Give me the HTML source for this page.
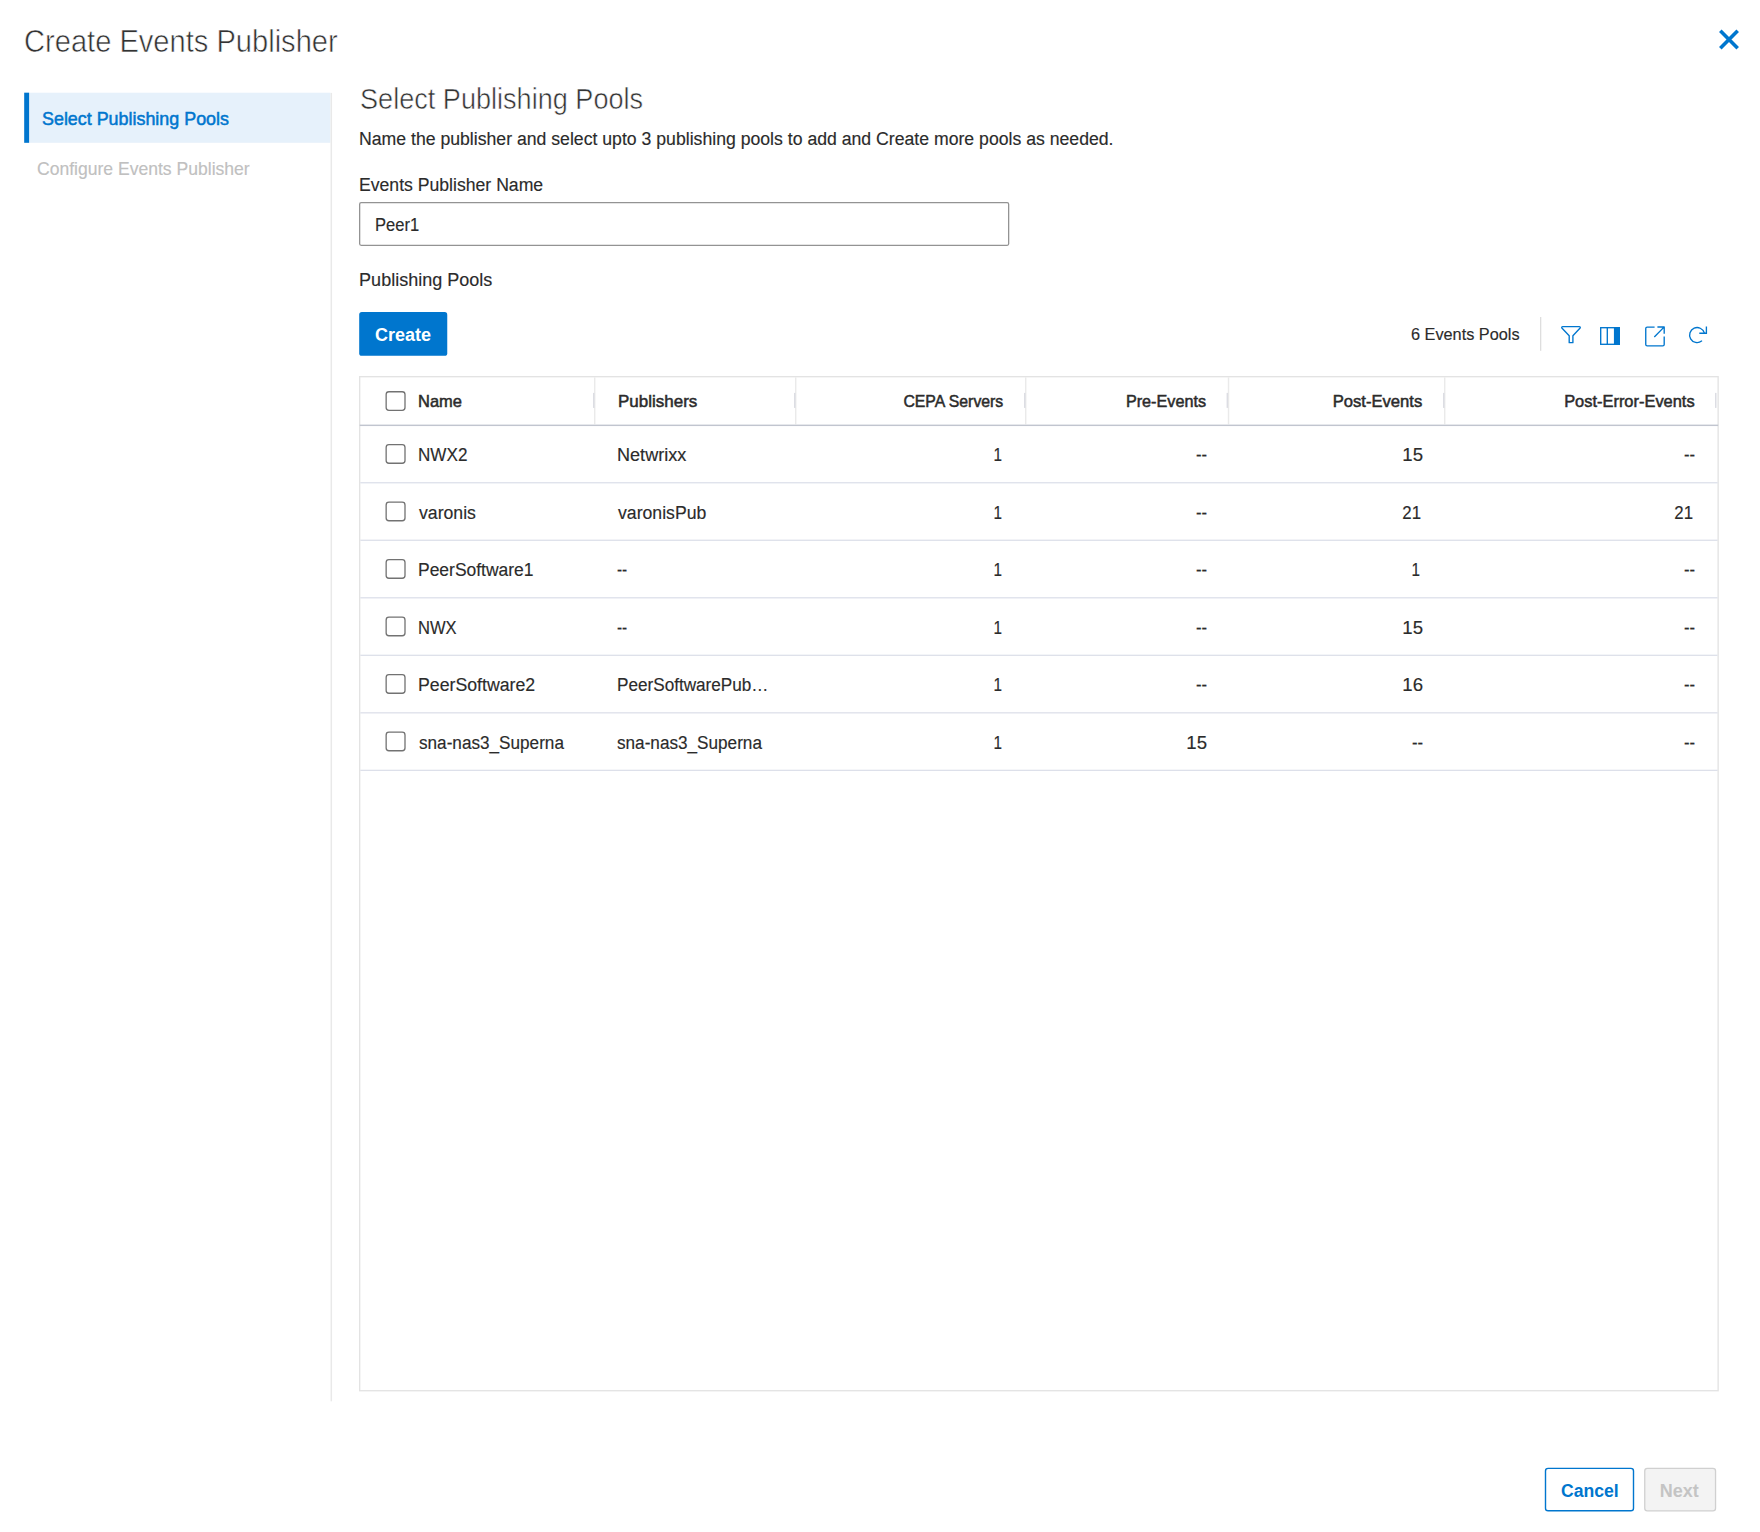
<!DOCTYPE html>
<html lang="en"><head><meta charset="utf-8"><title>Create Events Publisher</title>
<style>
html,body{margin:0;padding:0;background:#fff;}
body{width:1760px;height:1532px;position:relative;overflow:hidden;font-family:"Liberation Sans",sans-serif;}
.abs{position:absolute;box-sizing:border-box;}
.t{position:absolute;display:block;white-space:nowrap;margin:0;padding:0;border:0;background:none;font-family:"Liberation Sans",sans-serif;font-style:normal;text-decoration:none;text-align:left;letter-spacing:normal;box-sizing:content-box;overflow:visible;cursor:default;}

</style></head>
<body>
<svg class="abs" style="left:0;top:0" width="1760" height="1532" viewBox="0 0 1760 1532">
<rect x="24.20" y="92.70" width="306.20" height="50.10" fill="#e6f1fb"/>
<rect x="24.20" y="92.70" width="4.90" height="50.10" fill="#0076ce"/>
<rect x="330.55" y="92.90" width="1.50" height="1308.40" fill="#e9e9e9"/>
<path d="M1720.3 30.7 L1737.7 48.3 M1737.7 30.7 L1720.3 48.3" stroke="#0076ce" stroke-width="3.6" fill="none"/>
<rect x="359.65" y="202.65" width="649.00" height="42.70" rx="1.5" fill="#fff" stroke="#939393" stroke-width="1.3"/>
<rect x="359.20" y="312.10" width="88.05" height="43.70" rx="2.6" fill="#0076ce"/>
<rect x="1540.00" y="317.00" width="1.30" height="33.80" fill="#dedede"/>
<rect x="359.68" y="376.68" width="1358.45" height="1014.05" fill="none" stroke="#e3e3e3" stroke-width="1.35"/>
<rect x="594.00" y="377.30" width="1.45" height="46.90" fill="#eaeaea"/>
<rect x="795.00" y="377.30" width="1.45" height="46.90" fill="#eaeaea"/>
<rect x="1025.00" y="377.30" width="1.45" height="46.90" fill="#eaeaea"/>
<rect x="1227.80" y="377.30" width="1.45" height="46.90" fill="#eaeaea"/>
<rect x="1444.00" y="377.30" width="1.45" height="46.90" fill="#eaeaea"/>
<rect x="593.00" y="392.90" width="1.50" height="15.00" fill="#dcdde3"/>
<rect x="794.00" y="392.90" width="1.50" height="15.00" fill="#dcdde3"/>
<rect x="1024.00" y="392.90" width="1.50" height="15.00" fill="#dcdde3"/>
<rect x="1226.60" y="392.90" width="1.50" height="15.00" fill="#dcdde3"/>
<rect x="1443.00" y="392.90" width="1.50" height="15.00" fill="#dcdde3"/>
<rect x="1715.00" y="392.90" width="1.50" height="15.00" fill="#dcdde3"/>
<rect x="359.70" y="424.60" width="1358.50" height="1.45" fill="#c1c5cf"/>
<rect x="360.30" y="482.10" width="1357.30" height="1.30" fill="#dde0ea"/>
<rect x="360.30" y="539.62" width="1357.30" height="1.30" fill="#dde0ea"/>
<rect x="360.30" y="597.14" width="1357.30" height="1.30" fill="#dde0ea"/>
<rect x="360.30" y="654.66" width="1357.30" height="1.30" fill="#dde0ea"/>
<rect x="360.30" y="712.18" width="1357.30" height="1.30" fill="#dde0ea"/>
<rect x="360.30" y="769.70" width="1357.30" height="1.30" fill="#dde0ea"/>
<rect x="386.15" y="391.75" width="18.85" height="18.55" rx="2.8" fill="#fff" stroke="#727272" stroke-width="1.3"/>
<rect x="386.15" y="444.70" width="18.85" height="18.55" rx="2.8" fill="#fff" stroke="#727272" stroke-width="1.3"/>
<rect x="386.15" y="502.20" width="18.85" height="18.55" rx="2.8" fill="#fff" stroke="#727272" stroke-width="1.3"/>
<rect x="386.15" y="559.70" width="18.85" height="18.55" rx="2.8" fill="#fff" stroke="#727272" stroke-width="1.3"/>
<rect x="386.15" y="617.20" width="18.85" height="18.55" rx="2.8" fill="#fff" stroke="#727272" stroke-width="1.3"/>
<rect x="386.15" y="674.70" width="18.85" height="18.55" rx="2.8" fill="#fff" stroke="#727272" stroke-width="1.3"/>
<rect x="386.15" y="732.20" width="18.85" height="18.55" rx="2.8" fill="#fff" stroke="#727272" stroke-width="1.3"/>
<rect x="1545.50" y="1468.40" width="88.00" height="42.40" rx="2.6" fill="#fff" stroke="#0076ce" stroke-width="1.4"/>
<rect x="1644.75" y="1468.35" width="70.80" height="42.50" rx="2.6" fill="#f3f3f3" stroke="#d0d0d0" stroke-width="1.3"/>
<g fill="none" stroke="#0076ce" stroke-width="1.35">
<path transform="translate(1559 323)" stroke-linejoin="round" d="M3.9 3.65 H20.1 C21.4 3.65 21.6 4.5 20.9 5.3 L13.9 12.7 V19.65 H10.2 V12.7 L3.1 5.3 C2.4 4.5 2.6 3.65 3.9 3.65 Z"/>
<g transform="translate(1598 324)"><rect x="2.7" y="3.7" width="18.6" height="16.6"/><path d="M9.3 3.7 V20.3"/><rect x="16.6" y="3.7" width="4.7" height="16.6" fill="#0076ce"/></g>
<g transform="translate(1643 323)" stroke-linejoin="round"><path d="M11.6 4.1 H4.2 Q2.75 4.1 2.75 5.5 V21.5 Q2.75 22.9 4.2 22.9 H19.8 Q21.2 22.9 21.2 21.5 V13.5"/><path d="M11.3 14 L21 4.1 M14.4 3.95 H21.2 V10.7"/></g>
<g transform="translate(1686 323)"><path d="M18.3 9.9 A7.5 7.5 0 1 0 15.6 18.05" stroke-linecap="round"/><path d="M20.4 3.4 V10.2 H13.3"/></g>
</g>
</svg>

<header>
<h1 id="title" class="t" style="left:24.22px;transform-origin:0 50%;top:16.88px;font-size:31.8px;font-weight:400;color:#333;transform:scaleX(0.9149);line-height:48px;height:48px;-webkit-text-stroke:0.6px #fff;">Create Events Publisher</h1>
</header>
<nav>
<a id="nav1" class="t" style="left:42.25px;transform-origin:0 50%;top:105.53px;font-size:17.8px;font-weight:400;color:#0076ce;transform:scaleX(1.0061);line-height:27px;height:27px;-webkit-text-stroke:0.5px #0076ce;">Select Publishing Pools</a>
<span id="nav2" class="t" style="left:36.60px;transform-origin:0 50%;top:155.83px;font-size:17.8px;font-weight:400;color:#c0c0c0;transform:scaleX(0.9870);line-height:27px;height:27px;-webkit-text-stroke:0.15px #c0c0c0;">Configure Events Publisher</span>
</nav>
<main>
<h2 id="h2" class="t" style="left:360.09px;transform-origin:0 50%;top:76.98px;font-size:29.2px;font-weight:400;color:#333;transform:scaleX(0.9281);line-height:44px;height:44px;-webkit-text-stroke:0.55px #fff;">Select Publishing Pools</h2>
<p id="desc" class="t" style="left:359.31px;transform-origin:0 50%;top:126.16px;font-size:18.0px;font-weight:400;color:#2b2b2b;transform:scaleX(0.9805);line-height:27px;height:27px;-webkit-text-stroke:0.15px #2b2b2b;">Name the publisher and select upto 3 publishing pools to add and Create more pools as needed.</p>
<label id="lbl1" class="t" style="left:359.11px;transform-origin:0 50%;top:171.56px;font-size:18.0px;font-weight:400;color:#2b2b2b;transform:scaleX(0.9790);line-height:27px;height:27px;-webkit-text-stroke:0.15px #2b2b2b;">Events Publisher Name</label>
<span id="inp" class="t" style="left:374.93px;transform-origin:0 50%;top:211.56px;font-size:18.0px;font-weight:400;color:#2b2b2b;transform:scaleX(0.9189);line-height:27px;height:27px;-webkit-text-stroke:0.15px #2b2b2b;">Peer1</span>
<label id="lbl2" class="t" style="left:359.11px;transform-origin:0 50%;top:266.66px;font-size:18.0px;font-weight:400;color:#2b2b2b;transform:scaleX(1.0000);line-height:27px;height:27px;-webkit-text-stroke:0.15px #2b2b2b;">Publishing Pools</label>
<button type="button" id="create" class="t" style="left:375.00px;transform-origin:0 50%;top:321.86px;font-size:18.0px;font-weight:700;color:#ffffff;transform:scaleX(1.0000);line-height:27px;height:27px;">Create</button>
<span id="count" class="t" style="left:1410.96px;transform-origin:0 50%;top:322.18px;font-size:16.5px;font-weight:400;color:#2b2b2b;transform:scaleX(0.9865);line-height:25px;height:25px;-webkit-text-stroke:0.15px #2b2b2b;">6 Events Pools</span>
<span id="hName" class="t" style="left:417.91px;transform-origin:0 50%;top:389.39px;font-size:16.2px;font-weight:400;color:#2b2b2b;transform:scaleX(1.0167);line-height:24px;height:24px;-webkit-text-stroke:0.5px #2b2b2b;">Name</span>
<span id="hPub" class="t" style="left:617.56px;transform-origin:0 50%;top:389.39px;font-size:16.2px;font-weight:400;color:#2b2b2b;transform:scaleX(1.0493);line-height:24px;height:24px;-webkit-text-stroke:0.5px #2b2b2b;">Publishers</span>
<span id="hCepa" class="t" style="right:756.59px;transform-origin:100% 50%;top:389.39px;font-size:16.2px;font-weight:400;color:#2b2b2b;transform:scaleX(0.9766);line-height:24px;height:24px;-webkit-text-stroke:0.5px #2b2b2b;">CEPA Servers</span>
<span id="hPre" class="t" style="right:554.03px;transform-origin:100% 50%;top:389.39px;font-size:16.2px;font-weight:400;color:#2b2b2b;transform:scaleX(1.0000);line-height:24px;height:24px;-webkit-text-stroke:0.5px #2b2b2b;">Pre-Events</span>
<span id="hPost" class="t" style="right:338.20px;transform-origin:100% 50%;top:389.39px;font-size:16.2px;font-weight:400;color:#2b2b2b;transform:scaleX(1.0264);line-height:24px;height:24px;-webkit-text-stroke:0.5px #2b2b2b;">Post-Events</span>
<span id="hErr" class="t" style="right:65.30px;transform-origin:100% 50%;top:389.39px;font-size:16.2px;font-weight:400;color:#2b2b2b;transform:scaleX(1.0145);line-height:24px;height:24px;-webkit-text-stroke:0.5px #2b2b2b;">Post-Error-Events</span>
<span id="r0n" class="t" style="left:418.02px;transform-origin:0 50%;top:442.31px;font-size:18.0px;font-weight:400;color:#2b2b2b;transform:scaleX(0.9504);line-height:27px;height:27px;-webkit-text-stroke:0.15px #2b2b2b;">NWX2</span>
<span id="r0p" class="t" style="left:617.11px;transform-origin:0 50%;top:442.31px;font-size:18.0px;font-weight:400;color:#2b2b2b;transform:scaleX(1.0044);line-height:27px;height:27px;-webkit-text-stroke:0.15px #2b2b2b;">Netwrixx</span>
<span id="r0c0" class="t" style="right:758.21px;transform-origin:100% 50%;top:442.31px;font-size:18.0px;font-weight:400;color:#2b2b2b;transform:scaleX(0.8500);line-height:27px;height:27px;-webkit-text-stroke:0.15px #2b2b2b;">1</span>
<span id="r0c1" class="t" style="right:553.46px;transform-origin:100% 50%;top:442.31px;font-size:18.0px;font-weight:400;color:#2b2b2b;transform:scaleX(0.9250);line-height:27px;height:27px;-webkit-text-stroke:0.15px #2b2b2b;">--</span>
<span id="r0c2" class="t" style="right:337.40px;transform-origin:100% 50%;top:442.31px;font-size:18.0px;font-weight:400;color:#2b2b2b;transform:scaleX(1.0346);line-height:27px;height:27px;-webkit-text-stroke:0.15px #2b2b2b;">15</span>
<span id="r0c3" class="t" style="right:64.56px;transform-origin:100% 50%;top:442.31px;font-size:18.0px;font-weight:400;color:#2b2b2b;transform:scaleX(0.9250);line-height:27px;height:27px;-webkit-text-stroke:0.15px #2b2b2b;">--</span>
<span id="r1n" class="t" style="left:419.04px;transform-origin:0 50%;top:499.81px;font-size:18.0px;font-weight:400;color:#2b2b2b;transform:scaleX(0.9814);line-height:27px;height:27px;-webkit-text-stroke:0.15px #2b2b2b;">varonis</span>
<span id="r1p" class="t" style="left:618.45px;transform-origin:0 50%;top:499.81px;font-size:18.0px;font-weight:400;color:#2b2b2b;transform:scaleX(0.9803);line-height:27px;height:27px;-webkit-text-stroke:0.15px #2b2b2b;">varonisPub</span>
<span id="r1c0" class="t" style="right:758.21px;transform-origin:100% 50%;top:499.81px;font-size:18.0px;font-weight:400;color:#2b2b2b;transform:scaleX(0.8500);line-height:27px;height:27px;-webkit-text-stroke:0.15px #2b2b2b;">1</span>
<span id="r1c1" class="t" style="right:553.46px;transform-origin:100% 50%;top:499.81px;font-size:18.0px;font-weight:400;color:#2b2b2b;transform:scaleX(0.9250);line-height:27px;height:27px;-webkit-text-stroke:0.15px #2b2b2b;">--</span>
<span id="r1c2" class="t" style="right:339.47px;transform-origin:100% 50%;top:499.81px;font-size:18.0px;font-weight:400;color:#2b2b2b;transform:scaleX(0.9333);line-height:27px;height:27px;-webkit-text-stroke:0.15px #2b2b2b;">21</span>
<span id="r1c3" class="t" style="right:67.41px;transform-origin:100% 50%;top:499.81px;font-size:18.0px;font-weight:400;color:#2b2b2b;transform:scaleX(0.9333);line-height:27px;height:27px;-webkit-text-stroke:0.15px #2b2b2b;">21</span>
<span id="r2n" class="t" style="left:418.02px;transform-origin:0 50%;top:557.31px;font-size:18.0px;font-weight:400;color:#2b2b2b;transform:scaleX(0.9704);line-height:27px;height:27px;-webkit-text-stroke:0.15px #2b2b2b;">PeerSoftware1</span>
<span id="r2p" class="t" style="left:617.10px;transform-origin:0 50%;top:557.31px;font-size:18.0px;font-weight:400;color:#2b2b2b;transform:scaleX(0.8500);line-height:27px;height:27px;-webkit-text-stroke:0.15px #2b2b2b;">--</span>
<span id="r2c0" class="t" style="right:758.21px;transform-origin:100% 50%;top:557.31px;font-size:18.0px;font-weight:400;color:#2b2b2b;transform:scaleX(0.8500);line-height:27px;height:27px;-webkit-text-stroke:0.15px #2b2b2b;">1</span>
<span id="r2c1" class="t" style="right:553.46px;transform-origin:100% 50%;top:557.31px;font-size:18.0px;font-weight:400;color:#2b2b2b;transform:scaleX(0.9250);line-height:27px;height:27px;-webkit-text-stroke:0.15px #2b2b2b;">--</span>
<span id="r2c2" class="t" style="right:340.40px;transform-origin:100% 50%;top:557.31px;font-size:18.0px;font-weight:400;color:#2b2b2b;transform:scaleX(0.8500);line-height:27px;height:27px;-webkit-text-stroke:0.15px #2b2b2b;">1</span>
<span id="r2c3" class="t" style="right:64.56px;transform-origin:100% 50%;top:557.31px;font-size:18.0px;font-weight:400;color:#2b2b2b;transform:scaleX(0.9250);line-height:27px;height:27px;-webkit-text-stroke:0.15px #2b2b2b;">--</span>
<span id="r3n" class="t" style="left:418.04px;transform-origin:0 50%;top:614.81px;font-size:18.0px;font-weight:400;color:#2b2b2b;transform:scaleX(0.9195);line-height:27px;height:27px;-webkit-text-stroke:0.15px #2b2b2b;">NWX</span>
<span id="r3p" class="t" style="left:617.10px;transform-origin:0 50%;top:614.81px;font-size:18.0px;font-weight:400;color:#2b2b2b;transform:scaleX(0.8500);line-height:27px;height:27px;-webkit-text-stroke:0.15px #2b2b2b;">--</span>
<span id="r3c0" class="t" style="right:758.21px;transform-origin:100% 50%;top:614.81px;font-size:18.0px;font-weight:400;color:#2b2b2b;transform:scaleX(0.8500);line-height:27px;height:27px;-webkit-text-stroke:0.15px #2b2b2b;">1</span>
<span id="r3c1" class="t" style="right:553.46px;transform-origin:100% 50%;top:614.81px;font-size:18.0px;font-weight:400;color:#2b2b2b;transform:scaleX(0.9250);line-height:27px;height:27px;-webkit-text-stroke:0.15px #2b2b2b;">--</span>
<span id="r3c2" class="t" style="right:337.40px;transform-origin:100% 50%;top:614.81px;font-size:18.0px;font-weight:400;color:#2b2b2b;transform:scaleX(1.0346);line-height:27px;height:27px;-webkit-text-stroke:0.15px #2b2b2b;">15</span>
<span id="r3c3" class="t" style="right:64.56px;transform-origin:100% 50%;top:614.81px;font-size:18.0px;font-weight:400;color:#2b2b2b;transform:scaleX(0.9250);line-height:27px;height:27px;-webkit-text-stroke:0.15px #2b2b2b;">--</span>
<span id="r4n" class="t" style="left:418.02px;transform-origin:0 50%;top:672.31px;font-size:18.0px;font-weight:400;color:#2b2b2b;transform:scaleX(0.9839);line-height:27px;height:27px;-webkit-text-stroke:0.15px #2b2b2b;">PeerSoftware2</span>
<span id="r4p" class="t" style="left:617.16px;transform-origin:0 50%;top:672.31px;font-size:18.0px;font-weight:400;color:#2b2b2b;transform:scaleX(0.9521);line-height:27px;height:27px;-webkit-text-stroke:0.15px #2b2b2b;">PeerSoftwarePub…</span>
<span id="r4c0" class="t" style="right:758.21px;transform-origin:100% 50%;top:672.31px;font-size:18.0px;font-weight:400;color:#2b2b2b;transform:scaleX(0.8500);line-height:27px;height:27px;-webkit-text-stroke:0.15px #2b2b2b;">1</span>
<span id="r4c1" class="t" style="right:553.46px;transform-origin:100% 50%;top:672.31px;font-size:18.0px;font-weight:400;color:#2b2b2b;transform:scaleX(0.9250);line-height:27px;height:27px;-webkit-text-stroke:0.15px #2b2b2b;">--</span>
<span id="r4c2" class="t" style="right:337.40px;transform-origin:100% 50%;top:672.31px;font-size:18.0px;font-weight:400;color:#2b2b2b;transform:scaleX(1.0341);line-height:27px;height:27px;-webkit-text-stroke:0.15px #2b2b2b;">16</span>
<span id="r4c3" class="t" style="right:64.56px;transform-origin:100% 50%;top:672.31px;font-size:18.0px;font-weight:400;color:#2b2b2b;transform:scaleX(0.9250);line-height:27px;height:27px;-webkit-text-stroke:0.15px #2b2b2b;">--</span>
<span id="r5n" class="t" style="left:418.50px;transform-origin:0 50%;top:729.81px;font-size:18.0px;font-weight:400;color:#2b2b2b;transform:scaleX(0.9529);line-height:27px;height:27px;-webkit-text-stroke:0.15px #2b2b2b;">sna-nas3_Superna</span>
<span id="r5p" class="t" style="left:617.01px;transform-origin:0 50%;top:729.81px;font-size:18.0px;font-weight:400;color:#2b2b2b;transform:scaleX(0.9529);line-height:27px;height:27px;-webkit-text-stroke:0.15px #2b2b2b;">sna-nas3_Superna</span>
<span id="r5c0" class="t" style="right:758.21px;transform-origin:100% 50%;top:729.81px;font-size:18.0px;font-weight:400;color:#2b2b2b;transform:scaleX(0.8500);line-height:27px;height:27px;-webkit-text-stroke:0.15px #2b2b2b;">1</span>
<span id="r5c1" class="t" style="right:553.40px;transform-origin:100% 50%;top:729.81px;font-size:18.0px;font-weight:400;color:#2b2b2b;transform:scaleX(1.0346);line-height:27px;height:27px;-webkit-text-stroke:0.15px #2b2b2b;">15</span>
<span id="r5c2" class="t" style="right:337.40px;transform-origin:100% 50%;top:729.81px;font-size:18.0px;font-weight:400;color:#2b2b2b;transform:scaleX(0.9250);line-height:27px;height:27px;-webkit-text-stroke:0.15px #2b2b2b;">--</span>
<span id="r5c3" class="t" style="right:64.56px;transform-origin:100% 50%;top:729.81px;font-size:18.0px;font-weight:400;color:#2b2b2b;transform:scaleX(0.9250);line-height:27px;height:27px;-webkit-text-stroke:0.15px #2b2b2b;">--</span>
</main>
<footer>
<button type="button" id="cancel" class="t" style="left:1560.78px;transform-origin:0 50%;top:1477.76px;font-size:18.0px;font-weight:700;color:#0076ce;transform:scaleX(0.9781);line-height:27px;height:27px;">Cancel</button>
<button type="button" disabled id="next" class="t" style="left:1659.83px;transform-origin:0 50%;top:1477.76px;font-size:18.0px;font-weight:700;color:#c4c4c4;transform:scaleX(1.0000);line-height:27px;height:27px;">Next</button>
</footer>
</body></html>
